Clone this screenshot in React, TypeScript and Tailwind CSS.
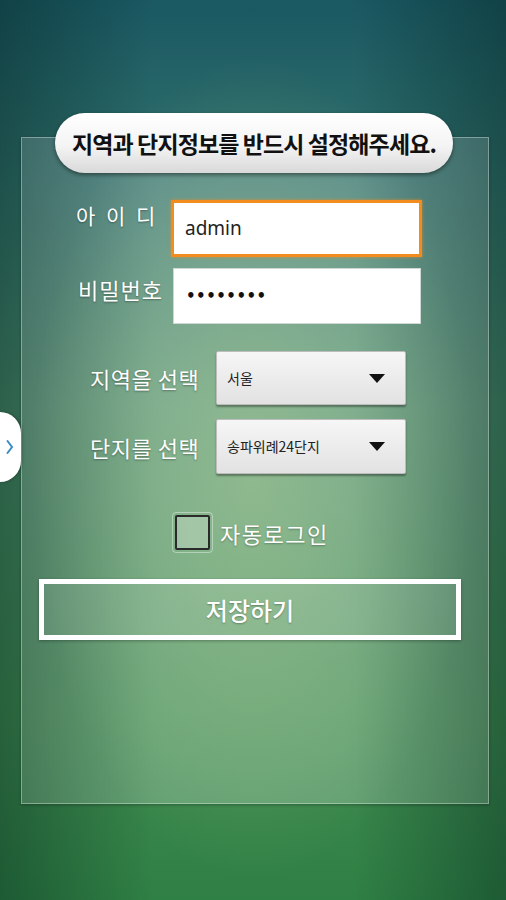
import { useState } from 'react';

const kr = "font-['Noto_Sans_CJK_KR','Noto_Sans',sans-serif]";

function Select({ value }: { value: string }) {
  return (
    <div className="flex h-full w-full items-center justify-between rounded-[2px] border border-[#bdbdbd] bg-[linear-gradient(to_bottom,#f6f6f6,#e2e2e2)] pl-[10px] pr-[20px] shadow-[0_2px_2px_rgba(0,0,0,0.35)]">
      <span className={`${kr} text-[14px] text-[#222]`}>{value}</span>
      <svg width="16" height="9" viewBox="0 0 16 9">
        <path d="M0 0 L16 0 L8 9 Z" fill="#111" />
      </svg>
    </div>
  );
}

export default function App() {
  const [autoLogin, setAutoLogin] = useState(false);

  return (
    <div className="relative h-[900px] w-[506px] overflow-hidden bg-[radial-gradient(ellipse_at_50%_52%,rgba(160,200,125,0.45),transparent_62%),linear-gradient(to_right,rgba(0,30,25,0.38),transparent_30%,transparent_70%,rgba(0,30,25,0.38)),linear-gradient(to_bottom,#1a5862_0%,#2c6c6a_16%,#4a8a6a_45%,#3f8a50_80%,#2f8044_100%)]">
      {/* side tab */}
      <div className="absolute left-0 top-[412px] flex h-[70px] w-[21px] items-center justify-center rounded-r-full bg-white shadow-[1px_0_3px_rgba(0,0,0,0.3)]">
        <svg width="8" height="16" viewBox="0 0 8 16" className="ml-[-2px]">
          <path d="M1.5 2 L6 8 L1.5 14" fill="none" stroke="#3b8cc4" strokeWidth="2" strokeLinecap="round" />
        </svg>
      </div>

      <div className="flex flex-col pt-[113px]">
        {/* notice pill */}
        <div className="relative z-10 ml-[55px] flex h-[60px] w-[398px] items-center justify-center rounded-full bg-[linear-gradient(to_bottom,#ffffff_0%,#f4f4f4_55%,#d9d9d9_100%)] shadow-[0_2px_4px_rgba(0,0,0,0.45)]">
          <span className={`${kr} whitespace-nowrap text-[23px] font-bold tracking-[-0.9px] text-[#111]`}>
            지역과 단지정보를 반드시 설정해주세요.
          </span>
        </div>

        {/* panel */}
        <div className="ml-[21px] mt-[-36px] flex h-[667px] w-[468px] flex-col border border-white/35 bg-[linear-gradient(to_right,rgba(255,255,255,0.14),rgba(255,255,255,0.22)_30%,rgba(255,255,255,0.22)_70%,rgba(255,255,255,0.14))] pt-[62px] shadow-[0_1px_3px_rgba(0,0,0,0.3)]">
          {/* id */}
          <div className="flex h-[57px] items-start">
            <span className={`${kr} ml-[54px] w-[95px] whitespace-nowrap text-[21px] leading-[30px] tracking-[3px] text-white [text-shadow:0_1px_2px_rgba(0,0,0,0.35)]`}>
              아 이 디
            </span>
            <div className="flex h-[57px] w-[251px] items-center border-[3px] border-[#f28c1e] bg-white pl-[11px] shadow-[0_0_3px_rgba(242,140,30,0.7)]">
              <span className="font-['Noto_Sans',sans-serif] text-[19px] text-[#222]">admin</span>
            </div>
          </div>

          {/* password */}
          <div className="mt-[11px] flex h-[56px] items-start">
            <span className={`${kr} ml-[56px] mt-[6px] w-[95px] whitespace-nowrap text-[22px] leading-[30px] tracking-[1px] text-white [text-shadow:0_1px_2px_rgba(0,0,0,0.35)]`}>
              비밀번호
            </span>
            <div className="flex h-[56px] w-[248px] items-center border border-[#cfd8d4] bg-white pl-[12px]">
              <span className="font-['DejaVu_Sans',sans-serif] text-[15px] font-bold tracking-[0.5px] text-[#111]">
                ••••••••
              </span>
            </div>
          </div>

          {/* region */}
          <div className="mt-[27px] flex h-[54px] items-center">
            <span className={`${kr} ml-[68px] w-[126px] whitespace-nowrap text-[22px] leading-[30px] tracking-[0.5px] text-white [text-shadow:0_1px_2px_rgba(0,0,0,0.35)]`}>
              지역을 선택
            </span>
            <div className="h-[54px] w-[190px]">
              <Select value="서울" />
            </div>
          </div>

          {/* complex */}
          <div className="mt-[14px] flex h-[55px] items-center">
            <span className={`${kr} ml-[68px] w-[126px] whitespace-nowrap text-[22px] leading-[30px] tracking-[0.5px] text-white [text-shadow:0_1px_2px_rgba(0,0,0,0.35)]`}>
              단지를 선택
            </span>
            <div className="h-[55px] w-[190px]">
              <Select value="송파위례24단지" />
            </div>
          </div>

          {/* auto login */}
          <div className="mt-[38px] flex h-[41px] items-center pl-[150px]">
            <button
              onClick={() => setAutoLogin(!autoLogin)}
              className="flex h-[41px] w-[41px] items-center justify-center rounded-[4px] border border-white/40 p-[2px]"
            >
              <span className="h-full w-full rounded-[2px] border-2 border-[#2a2a2a] bg-white/25" />
            </button>
            <span className={`${kr} ml-[7px] text-[22px] leading-[30px] tracking-[1.5px] text-white [text-shadow:0_1px_2px_rgba(0,0,0,0.3)]`}>
              자동로그인
            </span>
          </div>

          {/* save */}
          <div className="ml-[17px] mt-[26px] flex h-[61px] w-[422px] items-center justify-center border-[5px] border-white bg-white/10 shadow-[0_1px_3px_rgba(0,0,0,0.3)]">
            <span className={`${kr} text-[24px] font-medium text-white [text-shadow:0_1px_2px_rgba(0,0,0,0.3)]`}>
              저장하기
            </span>
          </div>
        </div>
      </div>
    </div>
  );
}
